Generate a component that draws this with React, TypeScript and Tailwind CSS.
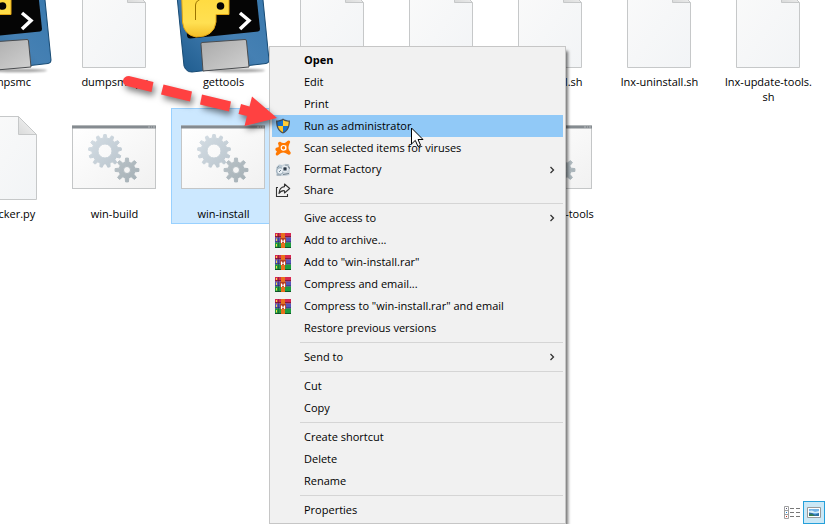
import React from 'react';

type IconKind = 'script' | 'python' | 'batch';

interface FileItem {
  name: string;
  icon: IconKind;
  selected?: boolean;
}

interface MenuEntry {
  label: string;
  icon?: React.ReactNode;
  bold?: boolean;
  active?: boolean;
  submenu?: boolean;
  height?: string;
}

// Outline of a cog wheel with its centre hole
const gearPath = (cx: number, cy: number, outer: number, inner: number, hole: number, teeth: number) => {
  const step = (Math.PI * 2) / teeth;
  const at = (r: number, a: number) => `${(cx + r * Math.cos(a)).toFixed(2)} ${(cy + r * Math.sin(a)).toFixed(2)}`;
  let d = '';
  for (let i = 0; i < teeth; i++) {
    const a = i * step - Math.PI / 2;
    d += `${i === 0 ? 'M' : 'L'}${at(inner, a - step * 0.3)}`;
    d += `L${at(outer, a - step * 0.15)}L${at(outer, a + step * 0.15)}L${at(inner, a + step * 0.3)}`;
  }
  d += `ZM${cx - hole} ${cy}a${hole} ${hole} 0 1 0 ${hole * 2} 0a${hole} ${hole} 0 1 0 ${-hole * 2} 0Z`;
  return d;
};

const ScriptIcon: React.FC = () => (
  <svg viewBox="0 0 97 96" className="h-24 w-[97px] shrink-0" aria-hidden="true">
    <path d="M16.5 6.5h45l18 18.500v64.500h-63z" fill="url(#paper)" stroke="#c6c8c9" />
    <path d="M61.5 6.5v18h18z" fill="url(#fold)" stroke="#c6c8c9" />
  </svg>
);

const BatchIcon: React.FC = () => (
  <svg viewBox="0 0 97 96" className="h-24 w-[97px] shrink-0" aria-hidden="true">
    <rect x="6.5" y="16" width="83" height="62.5" fill="url(#pane)" stroke="#c4c6c7" />
    <path d="M6 15.500h84v3H6z" fill="#858b90" />
    <path d="M82 17h2M85 17h1M87 17h2" stroke="#b6babd" />
    <path d={gearPath(39, 41, 16.5, 13, 7, 13)} fill="url(#gearBig)" stroke="url(#gearBig)" strokeLinejoin="round" fillRule="evenodd" />
    <path d={gearPath(61, 60, 12, 8, 3.5, 8)} fill="url(#gearSmall)" stroke="url(#gearSmall)" strokeLinejoin="round" fillRule="evenodd" />
  </svg>
);

const PythonIcon: React.FC = () => (
  <svg viewBox="0 0 97 96" className="h-24 w-[97px] shrink-0 overflow-visible" aria-hidden="true">
    <g transform="translate(-175 22)">
      <ellipse cx="236" cy="70.5" rx="29" ry="1.8" fill="#000" opacity="0.35" filter="url(#soft)" />
      <path d="M176 -14L261 -20L269 60Q269.5 63 266 63.5L192 72Q188 72.5 185.5 69L184 66Z" fill="url(#disk)" stroke="#174a73" />
      <path d="M184 -14L255 -18L260 29Q260 31 258 31.5L190 38.5Q187.5 38.5 187 36Z" fill="#050505" />
      <path d="M181.5 -10H229V14.5H216V22Q214 37 196 37Q184 35 182.5 22Z" fill="url(#snake)" stroke="#e3a613" />
      <path d="M195.5 20V5Q196 0 202 -1H212" fill="none" stroke="#9b7400" />
      <circle cx="220.5" cy="6" r="3.8" fill="#050505" />
      <path d="M240 13L249 20.5L240 29" fill="none" stroke="#fff" strokeWidth="3.5" />
      <path d="M201 44.5Q200.5 43 202 42.5L245 39.5Q246.5 39.5 246.5 41L249 67L203 71Z" fill="url(#metal)" stroke="#4a4c4f" />
    </g>
  </svg>
);

const SharedGradients: React.FC = () => (
  <svg width="0" height="0" className="absolute" aria-hidden="true">
    <defs>
      <linearGradient id="paper" x1="0" y1="0" x2="1" y2="1">
        <stop offset="0" stopColor="#fafafa" />
        <stop offset="1" stopColor="#f2f4f6" />
      </linearGradient>
      <linearGradient id="fold" x1="0" y1="1" x2="1" y2="0">
        <stop offset="0" stopColor="#d9dada" />
        <stop offset="1" stopColor="#f7f7f7" />
      </linearGradient>
      <linearGradient id="pane" x1="0" y1="0" x2="1" y2="1">
        <stop offset="0" stopColor="#ffffff" />
        <stop offset="1" stopColor="#f1f1f1" />
      </linearGradient>
      <linearGradient id="gearBig" x1="0" y1="0" x2="1" y2="1">
        <stop offset="0" stopColor="#d5dee5" />
        <stop offset="1" stopColor="#bac5cd" />
      </linearGradient>
      <linearGradient id="gearSmall" x1="0" y1="0" x2="1" y2="1">
        <stop offset="0" stopColor="#bac3c8" />
        <stop offset="1" stopColor="#a4afb5" />
      </linearGradient>
      <linearGradient id="disk" x1="0" y1="1" x2="1" y2="0">
        <stop offset="0" stopColor="#1d5a8c" />
        <stop offset="0.5" stopColor="#4580b3" />
        <stop offset="1" stopColor="#3677ac" />
      </linearGradient>
      <linearGradient id="snake" x1="0" y1="0" x2="0" y2="1">
        <stop offset="0" stopColor="#ffd93b" />
        <stop offset="0.7" stopColor="#ffe052" />
        <stop offset="1" stopColor="#f3bd26" />
      </linearGradient>
      <linearGradient id="metal" x1="0" y1="0" x2="1" y2="1">
        <stop offset="0" stopColor="#a9a9a9" />
        <stop offset="1" stopColor="#d2d2d2" />
      </linearGradient>
      <filter id="soft" x="-20%" y="-200%" width="140%" height="500%">
        <feGaussianBlur stdDeviation="1" />
      </filter>
    </defs>
  </svg>
);

const ShieldIcon: React.FC = () => (
  <svg viewBox="0 0 16 16" className="size-4" aria-hidden="true">
    <path d="M8 0.5C6 2 3.500 2.500 1 2.500C1 9 3 13.500 8 15.500C13 13.500 15 9 15 2.500C12.500 2.500 10 2 8 0.500Z" fill="#4a4f52" />
    <path d="M8 2C6.500 3 4.500 3.600 2.300 3.700Q2.400 6 2.900 8H8Z" fill="#1673cf" />
    <path d="M8 2C9.500 3 11.500 3.600 13.700 3.700Q13.600 6 13.100 8H8Z" fill="#ffcd36" />
    <path d="M2.900 8Q4 12.600 8 14.200V8Z" fill="#ffc72b" />
    <path d="M13.100 8Q12 12.600 8 14.200V8Z" fill="#1673cf" />
  </svg>
);

const AvastIcon: React.FC = () => (
  <svg viewBox="0 0 16 16" className="size-4" aria-hidden="true">
    <path
      d="M3 3.200Q3.400 1.300 5.200 1.700Q8 3.800 10.600 2.400L12.800 0.700Q15 -0.200 15.200 2L14 4.800Q12.900 7.600 14 10L15.700 12.500Q16 15 13.600 14.700L10.800 13.200Q8 12 5.600 13.300L2.600 15.400Q0.400 15.800 0.800 13.600L1.900 11.600L0.600 10.200Q-0.200 8 2 7.600Q4 7.600 3.800 6Z"
      fill="#ff7800"
    />
    <circle cx="8.5" cy="7.8" r="2.3" fill="none" stroke="#fff" strokeWidth="1.1" />
    <path d="M10.800 5.500V10.200" stroke="#fff" />
  </svg>
);

const FormatFactoryIcon: React.FC = () => (
  <svg viewBox="0 0 16 16" className="size-4" aria-hidden="true">
    <path d="M1.500 5L4 2.500L7.500 3L8 5.500V13.500H2L0.800 9Z" fill="#b9c8d3" />
    <path d="M7 3L10 1.800L14 2.300L15 5L14.500 13L11 14H6Z" fill="#ccd5dc" />
    <path d="M2 6L4 4M10 3.200L13.500 3M1.500 13H6" stroke="#8796a2" />
    <circle cx="5" cy="9" r="3.3" fill="#e9f0f5" stroke="#97a8b5" />
    <circle cx="10" cy="7" r="2.8" fill="#8593a0" stroke="#f0f4f7" />
    <circle cx="10" cy="6.8" r="1.3" fill="#2b3540" />
    <path d="M4 10L6 8M8 12.500L14 11.500" stroke="#70808d" />
    <path d="M13.500 4.500L14.500 6.500" stroke="#56646f" />
  </svg>
);

const ShareIcon: React.FC = () => (
  <svg viewBox="0 0 16 16" className="size-4" fill="none" stroke="#333" strokeWidth="1.1" aria-hidden="true">
    <path d="M3 5.500H1.500V14.500H12.500V12" />
    <path d="M9.500 2L14.700 6.500L9.500 11V8.700Q6 8.300 4 11.500Q4.300 5.200 9.500 4.600Z" strokeLinejoin="round" />
  </svg>
);

const RarIcon: React.FC = () => (
  <svg viewBox="0 0 16 16" className="size-4" aria-hidden="true">
    <path d="M0 1H16V5.500H0z" fill="#d72850" />
    <path d="M0 4H16V5.500H0z" fill="#8c1739" />
    <path d="M0 5.500H16V10.500H0z" fill="#5755b8" />
    <path d="M0 9.500H16V10.500H0z" fill="#302f72" />
    <path d="M0 10.500H16V16H0z" fill="#1c9c3f" />
    <path d="M0 15H16V16H0z" fill="#0d5725" />
    <path d="M1.500 2V4M1.500 6.500V9M1.500 12V14.500" stroke="#f5db43" />
    <path d="M3.500 1V16" stroke="#222" strokeOpacity="0.35" />
    <path d="M6 1H10V16H6z" fill="#e8701c" />
    <path d="M5 6H11V11H5z" fill="#b53d23" />
    <path d="M6.500 11V7.500M9.500 11V7.500M8 10V8.500" stroke="#fff" strokeWidth="1.2" />
  </svg>
);

const icons: Record<IconKind, React.FC> = {
  script: ScriptIcon,
  python: PythonIcon,
  batch: BatchIcon,
};

const files: (FileItem | null)[] = [
  { name: 'dumpsmc', icon: 'python' },
  { name: 'dumpsmc.py', icon: 'script' },
  { name: 'gettools', icon: 'python' },
  { name: '', icon: 'script' },
  { name: '', icon: 'script' },
  { name: 'lnx-install.sh', icon: 'script' },
  { name: 'lnx-uninstall.sh', icon: 'script' },
  { name: 'lnx-update-tools.\nsh', icon: 'script' },
  { name: 'unlocker.py', icon: 'script' },
  { name: 'win-build', icon: 'batch' },
  { name: 'win-install', icon: 'batch', selected: true },
  null,
  null,
  { name: 'win-update-tools', icon: 'batch' },
];

const menuGroups: MenuEntry[][] = [
  [
    { label: 'Open', bold: true },
    { label: 'Edit' },
    { label: 'Print' },
    { label: 'Run as administrator', icon: <ShieldIcon />, active: true },
    { label: 'Scan selected items for viruses', icon: <AvastIcon /> },
    { label: 'Format Factory', icon: <FormatFactoryIcon />, submenu: true, height: 'h-[21px]' },
    { label: 'Share', icon: <ShareIcon />, height: 'h-5' },
  ],
  [
    { label: 'Give access to', submenu: true },
    { label: 'Add to archive...', icon: <RarIcon /> },
    { label: 'Add to "win-install.rar"', icon: <RarIcon /> },
    { label: 'Compress and email...', icon: <RarIcon /> },
    { label: 'Compress to "win-install.rar" and email', icon: <RarIcon /> },
    { label: 'Restore previous versions' },
  ],
  [{ label: 'Send to', submenu: true }],
  [{ label: 'Cut' }, { label: 'Copy' }],
  [{ label: 'Create shortcut' }, { label: 'Delete' }, { label: 'Rename' }],
  [{ label: 'Properties' }],
];

const FileTile: React.FC<{ file: FileItem }> = ({ file }) => {
  const Icon = icons[file.icon];
  return (
    <button
      type="button"
      className={`flex h-[116px] flex-col items-center border pt-px ${
        file.selected ? 'border-[#99d1ff] bg-[#cce8ff]' : 'border-transparent'
      }`}
    >
      <Icon />
      <span className="text-center leading-[15px] whitespace-pre">{file.name}</span>
    </button>
  );
};

const ContextMenu: React.FC = () => (
  <div
    role="menu"
    className="absolute top-[46px] left-[269px] w-[297px] border border-[#c6c6c6] bg-[#f1f1f1] p-0.5 shadow-[3px_4px_3px_-1px_rgba(0,0,0,0.55)]"
  >
    {menuGroups.map((group, index) => (
      <React.Fragment key={index}>
        {index > 0 && <div role="separator" className="my-[3px] ml-7 h-px bg-[#d5d5d5]" />}
        {group.map((entry) => (
          <button
            key={entry.label}
            type="button"
            role="menuitem"
            className={`flex w-full items-center text-left ${entry.height ?? 'h-[22px]'} ${
              entry.active ? 'bg-[#91c9f7]' : ''
            } ${entry.bold ? 'font-bold' : ''}`}
          >
            <span className="w-8 shrink-0 pl-[3px]">{entry.icon}</span>
            <span className="flex-1 whitespace-nowrap">{entry.label}</span>
            {entry.submenu && (
              <svg viewBox="0 0 8 8" className="mr-[7px] size-2" fill="none" stroke="#333" strokeWidth="1.3" aria-hidden="true">
                <path d="M2.500 1L5.500 4L2.500 7" />
              </svg>
            )}
          </button>
        ))}
      </React.Fragment>
    ))}
  </div>
);

const RedArrow: React.FC = () => (
  <svg
    viewBox="0 0 164 62"
    className="pointer-events-none absolute top-[70px] left-[117px] h-[62px] w-[164px] drop-shadow-[2px_4px_3px_rgba(0,0,0,0.5)]"
    fill="#ff4141"
    aria-hidden="true"
  >
    <g transform="translate(-117 -70)">
      <path d="M129 76L153.500 82L151.500 92L127 86Q122.500 84 123 80.500Q124 76 129 76Z" />
      <path d="M163.500 84.500L192 91.500L190 101.500L161 94.500Z" />
      <path d="M202 94.500L231 101.500L229 111.500L200 104.500Z" />
      <path d="M241 104L249.500 106.500L252 96.500L277 118L244.500 126L247 116L238.500 114Z" />
    </g>
  </svg>
);

const Pointer: React.FC = () => (
  <svg viewBox="0 0 13 21" className="pointer-events-none absolute top-[127px] left-[411px] h-[21px] w-[13px]" aria-hidden="true">
    <path d="M0.500 1V17L4.300 13.400L7 19.500L9.600 18.300L7 12.500H12Z" fill="#fff" stroke="#000" />
  </svg>
);

const ViewSwitcher: React.FC = () => (
  <footer className="flex items-center justify-end gap-px pr-1">
    <button type="button" aria-label="Details" className="p-px">
      <svg viewBox="0 0 18 16" className="h-4 w-[18px]" fill="none" aria-hidden="true">
        <path d="M1.500 1.500H5.500V13.500H1.500zM1.500 5.500H5.500M1.500 9.500H5.500" stroke="#a0a0a0" />
        <path d="M7 3.500H11M13 3.500H17M7 7.500H11M13 7.500H17M7 11.500H11M13 11.500H17" stroke="#777" />
        <path d="M3 3.500H4" stroke="#557" />
        <path d="M3 7.500H4" stroke="#1684d9" />
        <path d="M3 11.500H4" stroke="#c62b1b" />
      </svg>
    </button>
    <button
      type="button"
      aria-label="Large icons"
      className="flex h-[23px] w-[22px] items-center justify-center border border-[#26a0da] bg-[#cbe8f6]"
    >
      <svg viewBox="0 0 14 11" className="h-[11px] w-[14px]" aria-hidden="true">
        <path d="M0.500 0.500H13.500V10.500H0.500z" fill="#fff" stroke="#999" />
        <path d="M2 2H12V9H2z" fill="#75b5e7" />
        <path d="M2 4L5 3.500L8 5L12 4V6H2z" fill="#d8ecf8" />
        <path d="M2 5.500L5 6L8 7.500L12 6V9H2z" fill="#2e6fa3" />
        <path d="M2 7.500L5 7L8 9H2z" fill="#347d4b" />
      </svg>
    </button>
  </footer>
);

const App: React.FC = () => {
  return (
    <div className="relative flex min-h-screen flex-col overflow-hidden bg-white font-['Open_Sans','Noto_Sans',sans-serif] text-[11px] text-black">
      <SharedGradients />
      <main className="-mt-6 -ml-[47px] grid flex-1 grid-cols-[repeat(auto-fill,105px)] content-start gap-x-1 gap-y-4">
        {files.map((file, index) => (file ? <FileTile key={index} file={file} /> : <div key={index} />))}
      </main>
      <ViewSwitcher />
      <ContextMenu />
      <RedArrow />
      <Pointer />
    </div>
  );
};

export default App;
